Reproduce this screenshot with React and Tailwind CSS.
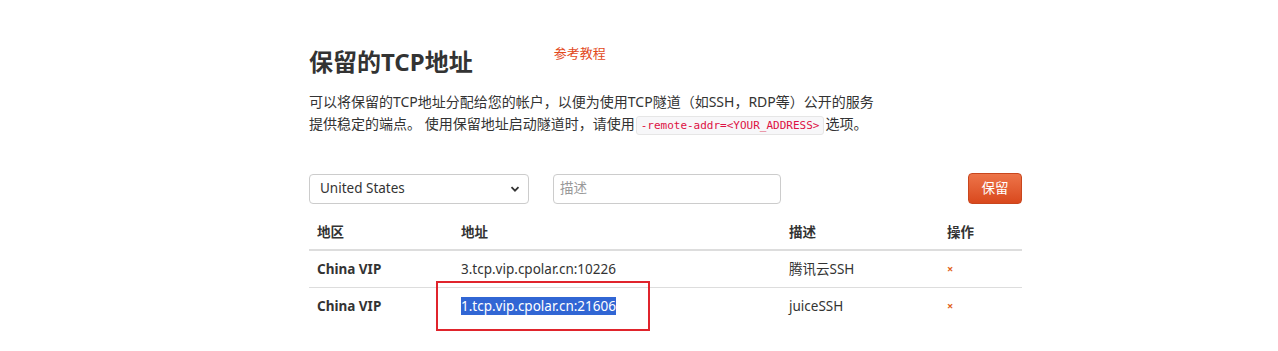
import React from 'react';

const font = { fontFamily: '"Noto Sans", "Noto Sans CJK SC", sans-serif' };

function ChevronDown() {
  return (
    <svg width="10" height="10" viewBox="0 0 10 10" className="text-[#333]">
      <path d="M1.5 3.2 L5 6.7 L8.5 3.2" fill="none" stroke="currentColor" strokeWidth="1.8" />
    </svg>
  );
}

export default function App() {
  const rows = [
    { region: 'China VIP', addr: '3.tcp.vip.cpolar.cn:10226', desc: '腾讯云SSH', marked: false },
    { region: 'China VIP', addr: '1.tcp.vip.cpolar.cn:21606', desc: 'juiceSSH', marked: true },
  ];
  return (
    <div className="h-[351px] w-[1278px] bg-white text-[#333]" style={font}>
      <div className="ml-[309px] w-[713px] pt-[42px]">
        <div className="flex items-start">
          <h1 className="text-[24px] font-bold leading-[40px] text-[#333]">保留的TCP地址</h1>
          <a className="ml-[81px] mt-[1px] text-[13px] leading-[20px] text-[#e2491c]">参考教程</a>
        </div>
        <p className="mt-[9px] w-[600px] text-[14px] leading-[22px] text-[#333]">
          可以将保留的TCP地址分配给您的帐户，以便为使用TCP隧道（如SSH，RDP等）公开的服务
          <br />
          提供稳定的端点。 使用保留地址启动隧道时，请使用
          <code
            className="mx-[1px] inline-block rounded-[3px] border border-[#e6e6e6] bg-[#f7f7f9] px-[4px] align-middle text-[11px] leading-[17px] text-[#dd1144]"
            style={{ fontFamily: '"DejaVu Sans Mono", monospace' }}
          >
            -remote-addr=&lt;YOUR_ADDRESS&gt;
          </code>
          选项。
        </p>

        <div className="mt-[38px] flex items-center">
          <div className="flex h-[30px] w-[220px] items-center justify-between rounded-[4px] border border-[#ccc] pl-[10px] pr-[8px] text-[13.5px]">
            <span>United States</span>
            <ChevronDown />
          </div>
          <div className="ml-[24px] flex h-[30px] w-[228px] items-center rounded-[4px] border border-[#ccc] px-[6px] text-[13.5px] text-[#999]">
            描述
          </div>
          <button className="ml-auto h-[31px] w-[54px] rounded-[4px] border border-[#c9461d] bg-gradient-to-b from-[#ed7448] to-[#d9481c] text-[13.5px] text-white">
            保留
          </button>
        </div>

        <table className="mt-[10px] w-full border-collapse text-left text-[13.5px]">
          <thead>
            <tr className="h-[36px] border-b-2 border-[#ddd]">
              <th className="w-[144px] px-[8px] py-0 font-bold leading-[20px]">地区</th>
              <th className="w-[328px] px-[8px] py-0 font-bold leading-[20px]">地址</th>
              <th className="w-[158px] px-[8px] py-0 font-bold leading-[20px]">描述</th>
              <th className="px-[8px] py-0 font-bold leading-[20px]">操作</th>
            </tr>
          </thead>
          <tbody>
            {rows.map((row, i) => (
              <tr key={i} className={`h-[37px] ${i === 0 ? 'border-b border-[#ddd]' : ''}`}>
                <td className="px-[8px] py-0 font-bold leading-[20px]">{row.region}</td>
                <td className="relative px-[8px] py-0 leading-[20px]">
                  {row.marked ? (
                    <>
                      <span className="bg-[#3166d4] text-white">{row.addr}</span>
                      <div className="absolute left-[-17px] top-[-7px] h-[50px] w-[214px] border-2 border-[#e0242c]" />
                    </>
                  ) : (
                    row.addr
                  )}
                </td>
                <td className="px-[8px] py-0 leading-[20px]">{row.desc}</td>
                <td className="px-[8px] py-0 leading-[20px]">
                  <span className="text-[11px] font-bold text-[#e2641c]">×</span>
                </td>
              </tr>
            ))}
          </tbody>
        </table>
      </div>
    </div>
  );
}
